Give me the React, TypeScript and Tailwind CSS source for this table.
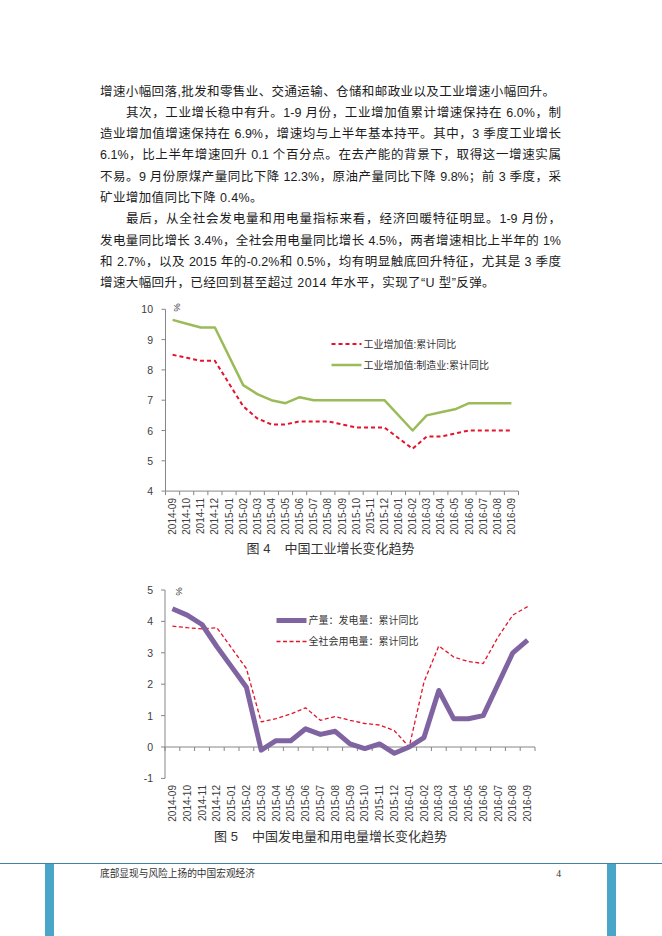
import React from "react";

// month labels 2014-09 .. 2016-09
const months = (() => {
  const out: string[] = [];
  let y = 2014;
  let m = 9;
  for (let i = 0; i < 25; i++) {
    out.push(`${y}-${String(m).padStart(2, "0")}`);
    m++;
    if (m > 12) {
      m = 1;
      y++;
    }
  }
  return out;
})();

type Series = {
  values: (number | null)[];
  color: string;
  width: number;
  dash?: string;
};

type ChartProps = {
  top: number; // svg top in page coords
  height: number;
  x0: number;
  x1: number;
  yMax: number;
  yMin: number;
  yTopPx: number; // pixel of yMax
  unit: number; // px per unit
  axisAt: number; // value where x axis sits
  labelTop: number;
  series: Series[];
  legend: { y: number; x: number; text: string; s: Series }[];
  pct: { x: number; y: number };
};

const LineChart = (p: ChartProps) => {
  const w = (p.x1 - p.x0) / 25;
  const cx = (i: number) => p.x0 + w * (i + 0.5);
  const yv = (v: number) => p.yTopPx + (p.yMax - v) * p.unit;
  const ticks: number[] = [];
  for (let v = p.yMin; v <= p.yMax; v++) ticks.push(v);
  const axisY = yv(p.axisAt);

  const pathOf = (vals: (number | null)[]) =>
    vals
      .map((v, i) => (v === null ? null : `${cx(i).toFixed(1)} ${yv(v).toFixed(1)}`))
      .filter(Boolean)
      .map((pt, k) => (k === 0 ? "M" : "L") + pt)
      .join(" ");

  return (
    <svg
      width={430}
      height={p.height}
      viewBox={`130 ${p.top} 430 ${p.height}`}
      className="block ml-[130px]"
      fontFamily="'Liberation Sans', 'Noto Sans CJK SC', sans-serif"
    >
      {/* y axis */}
      <line x1={p.x0} y1={yv(p.yMax)} x2={p.x0} y2={yv(p.yMin)} stroke="#868686" strokeWidth={1} />
      {ticks.map((v) => (
        <g key={v}>
          <line x1={p.x0 - 4} y1={yv(v)} x2={p.x0} y2={yv(v)} stroke="#868686" strokeWidth={1} />
          <text x={153} y={yv(v)} fontSize={10.5} fill="#404040" textAnchor="end" dominantBaseline="central">
            {v}
          </text>
        </g>
      ))}
      <text
        x={p.pct.x}
        y={p.pct.y}
        fontSize={9.5}
        fill="#404040"
        textAnchor="middle"
        dominantBaseline="central"
        transform={`rotate(90 ${p.pct.x} ${p.pct.y})`}
      >
        %
      </text>

      {/* x axis */}
      <line x1={p.x0} y1={axisY} x2={p.x1} y2={axisY} stroke="#868686" strokeWidth={1} />
      {Array.from({ length: 26 }).map((_, k) => (
        <line
          key={k}
          x1={p.x0 + w * k}
          y1={axisY}
          x2={p.x0 + w * k}
          y2={axisY + 4}
          stroke="#868686"
          strokeWidth={1}
        />
      ))}
      {months.map((m, i) => (
        <text
          key={m}
          x={cx(i)}
          y={p.labelTop}
          fontSize={10}
          fill="#404040"
          textAnchor="end"
          dominantBaseline="central"
          transform={`rotate(-90 ${cx(i)} ${p.labelTop})`}
        >
          {m}
        </text>
      ))}

      {/* series */}
      {p.series.map((s, k) => (
        <path
          key={k}
          d={pathOf(s.values)}
          fill="none"
          stroke={s.color}
          strokeWidth={s.width}
          strokeDasharray={s.dash}
          strokeLinejoin="round"
        />
      ))}

      {/* legend */}
      {p.legend.map((l, k) => (
        <g key={k}>
          <line
            x1={l.x}
            y1={l.y}
            x2={l.x + 30}
            y2={l.y}
            stroke={l.s.color}
            strokeWidth={l.s.width}
            strokeDasharray={l.s.dash}
          />
          <text x={l.x + 32} y={l.y} fontSize={10} fill="#333" dominantBaseline="central">
            {l.text}
          </text>
        </g>
      ))}
    </svg>
  );
};

// 图4 data
const red1: Series = {
  values: [8.5, 8.4, 8.3, 8.3, null, 6.8, 6.4, 6.2, 6.2, 6.3, 6.3, 6.3, 6.2, 6.1, 6.1, 6.1, null, 5.4, 5.8, 5.8, 5.9, 6.0, 6.0, 6.0, 6.0],
  color: "#e3142c",
  width: 2,
  dash: "4 3",
};
const green1: Series = {
  values: [9.65, 9.52, 9.4, 9.4, null, 7.5, 7.2, 7.0, 6.9, 7.1, 7.0, 7.0, 7.0, 7.0, 7.0, 7.0, null, 6.0, 6.5, 6.6, 6.7, 6.9, 6.9, 6.9, 6.9],
  color: "#9bbb59",
  width: 2.5,
};

// 图5 data
const purple2: Series = {
  values: [4.4, 4.2, 3.9, 3.2, 2.55, 1.9, -0.1, 0.2, 0.2, 0.58, 0.4, 0.5, 0.1, -0.05, 0.1, -0.2, 0, 0.3, 1.8, 0.9, 0.9, 1.0, 2.0, 3.0, 3.4],
  color: "#8064a2",
  width: 5,
};
const red2: Series = {
  values: [3.85, 3.8, 3.76, 3.8, 3.15, 2.5, 0.8, 0.9, 1.05, 1.25, 0.85, 0.97, 0.85, 0.75, 0.7, 0.52, 0, 2.07, 3.22, 2.87, 2.72, 2.66, 3.5, 4.2, 4.47],
  color: "#e3142c",
  width: 1.3,
  dash: "4 2.5",
};

type Line = { text: string; indent?: boolean; full: boolean };

const lines: Line[] = [
  { text: "增速小幅回落,批发和零售业、交通运输、仓储和邮政业以及工业增速小幅回升。", full: false },
  { text: "其次，工业增长稳中有升。1-9 月份，工业增加值累计增速保持在 6.0%，制", indent: true, full: true },
  { text: "造业增加值增速保持在 6.9%，增速均与上半年基本持平。其中，3 季度工业增长", full: true },
  { text: "6.1%，比上半年增速回升 0.1 个百分点。在去产能的背景下，取得这一增速实属", full: true },
  { text: "不易。9 月份原煤产量同比下降 12.3%，原油产量同比下降 9.8%；前 3 季度，采", full: true },
  { text: "矿业增加值同比下降 0.4%。", full: false },
  { text: "最后，从全社会发电量和用电量指标来看，经济回暖特征明显。1-9 月份，", indent: true, full: true },
  { text: "发电量同比增长 3.4%，全社会用电量同比增长 4.5%，两者增速相比上半年的 1%", full: true },
  { text: "和 2.7%，以及 2015 年的-0.2%和 0.5%，均有明显触底回升特征，尤其是 3 季度", full: true },
  { text: "增速大幅回升，已经回到甚至超过 2014 年水平，实现了“U 型”反弹。", full: false },
];

const App = () => {
  return (
    <div className="w-[662px] h-[936px] bg-white overflow-hidden flex flex-col font-['Liberation_Sans','Noto_Sans_CJK_SC',sans-serif]">
      {/* Body text */}
      <div className="h-[295px] pt-[81.5px] ml-[100px] w-[461px] text-[12.5px] leading-[21.3px] text-[#1c1c1c]">
        {lines.map((l, k) => (
          <div
            key={k}
            className={
              (l.indent ? "pl-[26px] " : "") +
              (l.full ? "whitespace-nowrap text-justify [text-align-last:justify]" : "whitespace-nowrap text-left tracking-[0.4px]")
            }
          >
            {l.text}
          </div>
        ))}
      </div>

      {/* Chart 4 */}
      <LineChart
        top={295}
        height={244}
        x0={165.5}
        x1={518.5}
        yMax={10}
        yMin={4}
        yTopPx={309.3}
        unit={30.3}
        axisAt={4}
        labelTop={498}
        series={[red1, green1]}
        legend={[
          { x: 331.5, y: 344, text: "工业增加值:累计同比", s: red1 },
          { x: 331.5, y: 365, text: "工业增加值:制造业:累计同比", s: green1 },
        ]}
        pct={{ x: 177.5, y: 307.5 }}
      />
      <div className="h-[20px] leading-[20px] ml-[100px] w-[461px] text-center text-[13px] text-[#333]">
        图 4<span className="ml-[14px]">中国工业增长变化趋势</span>
      </div>

      {/* Chart 5 */}
      <LineChart
        top={559}
        height={268}
        x0={165}
        x1={535}
        yMax={5}
        yMin={-1}
        yTopPx={590}
        unit={31.4}
        axisAt={0}
        labelTop={785}
        series={[red2, purple2]}
        legend={[
          { x: 276.5, y: 620.5, text: "产量：发电量：累计同比", s: purple2 },
          { x: 276.5, y: 641.5, text: "全社会用电量：累计同比", s: red2 },
        ]}
        pct={{ x: 179, y: 591.5 }}
      />
      <div className="h-[20px] leading-[20px] ml-[100px] w-[461px] text-center text-[13px] text-[#333]">
        图 5<span className="ml-[14px]">中国发电量和用电量增长变化趋势</span>
      </div>

      {/* Footer */}
      <div className="mt-[16px] flex-1 flex border-t border-[#4081a8]">
        <div className="ml-[45px] w-[9px] bg-[#4aa6c8]" />
        <div className="ml-[46px] w-[461px] flex justify-between pt-[3px] text-[9.7px] leading-[14px] text-[#333] font-['Liberation_Serif','Noto_Sans_CJK_SC',serif]">
          <span>底部显现与风险上扬的中国宏观经济</span>
          <span>4</span>
        </div>
        <div className="ml-[46px] w-[9px] bg-[#4aa6c8]" />
      </div>
    </div>
  );
};

export default App;
